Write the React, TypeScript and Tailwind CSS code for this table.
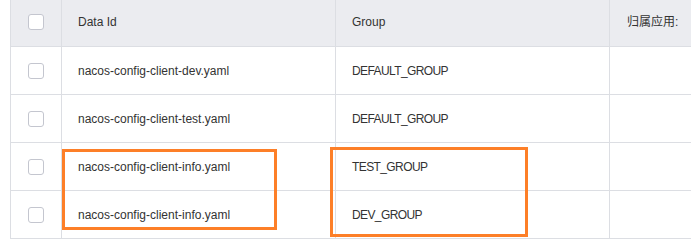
import React from 'react'

interface ConfigRow {
  dataId: string
  group: string
}

const rows: ConfigRow[] = [
  { dataId: 'nacos-config-client-dev.yaml', group: 'DEFAULT_GROUP' },
  { dataId: 'nacos-config-client-test.yaml', group: 'DEFAULT_GROUP' },
  { dataId: 'nacos-config-client-info.yaml', group: 'TEST_GROUP' },
  { dataId: 'nacos-config-client-info.yaml', group: 'DEV_GROUP' },
]

function Checkbox() {
  return <span className="block h-4 w-4 rounded-[3px] border border-[#c4c6cf] bg-white" />
}

function Row({ header, cells }: { header?: boolean; cells: React.ReactNode[] }) {
  return (
    <div
      className={`flex border-b border-[#dcdee3] ${header ? 'h-[49px] bg-[#ebecf0]' : 'h-12 bg-white'}`}
    >
      <div className="flex w-[51px] shrink-0 items-center justify-center border-r border-[#dcdee3]">
        <Checkbox />
      </div>
      <div className="flex w-[274px] shrink-0 items-center border-r border-[#dcdee3] pl-4">
        {cells[0]}
      </div>
      <div className="flex w-[274px] shrink-0 items-center border-r border-[#dcdee3] pl-4">
        {cells[1]}
      </div>
      <div className="flex w-[200px] shrink-0 items-center pl-[17px]">{cells[2]}</div>
    </div>
  )
}

export default function App() {
  return (
    <div
      className="relative h-[241px] w-[691px] overflow-hidden bg-white text-[12px] text-[#333333]"
      style={{ fontFamily: '"Liberation Sans", "Noto Sans CJK SC", sans-serif' }}
    >
      <div className="-mt-[2px] ml-[10px] w-[800px] border-l border-[#dcdee3]">
        <Row header cells={['Data Id', 'Group', '归属应用:']} />
        {rows.map((row, i) => (
          <Row
            key={i}
            cells={[
              row.dataId,
              <span className="tracking-[-0.6px]">{row.group}</span>,
              '',
            ]}
          />
        ))}
      </div>

      {/* highlight boxes */}
      <div className="absolute left-[62px] top-[149px] h-[81px] w-[215px] border-[3px] border-[#fd7f28]" />
      <div className="absolute left-[330px] top-[147px] h-[90px] w-[198px] border-[3px] border-[#fd7f28]" />
    </div>
  )
}
